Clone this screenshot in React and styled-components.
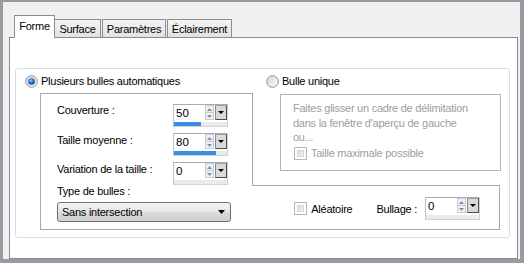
import React from "react";
import styled, { createGlobalStyle } from "styled-components";

const GlobalStyle = createGlobalStyle`
  * {
    box-sizing: border-box;
  }
  html,
  body {
    margin: 0;
    padding: 0;
    background: #979ca3;
  }
  body {
    font-family: "Liberation Sans", Arial, sans-serif;
    font-size: 11px;
    letter-spacing: -0.25px;
    color: #000;
  }
`;

const Window = styled.div`
  width: 524px;
  height: 263px;
  display: flex;
  flex-direction: column;
  background: #f0f0f0;
  border-style: solid;
  border-color: #979ca3;
  border-width: 2px 4px 4px 3px;
  padding: 13px 2px 0 6px;
`;

const TabStrip = styled.div`
  display: flex;
  align-items: flex-end;
  height: 23px;
  padding-left: 5px;
`;

const Tab = styled.div`
  width: ${p => p.$w}px;
  height: ${p => (p.$active ? 23 : 18)}px;
  margin-bottom: ${p => (p.$active ? 0 : 1)}px;
  margin-left: ${p => p.$ml || 0}px;
  padding-bottom: ${p => (p.$active ? 2 : 0)}px;
  display: flex;
  align-items: center;
  justify-content: center;
  border: 1px solid #898c95;
  border-bottom: none;
  background: ${p =>
    p.$active ? "#fff" : "linear-gradient(#f4f4f4, #e2e2e2)"};
  position: relative;
  z-index: ${p => (p.$active ? 1 : 0)};
`;

const Panel = styled.div`
  flex: 1;
  margin-top: -1px;
  display: flex;
  flex-direction: column;
  background: #fff;
  border: 1px solid #898c95;
  padding: 30px 7px 20px 5px;
`;

const Group = styled.div`
  flex: 1;
  display: flex;
  flex-direction: column;
  border: 1px solid #d5dfe5;
  border-radius: 3px;
  padding: 5px 8px 7px 9px;
`;

const RadioRow = styled.div`
  display: flex;
  height: 14px;
  align-items: center;
`;

const RadioCell = styled.label`
  display: flex;
  align-items: center;
  gap: 3px;
  width: ${p => (p.$w ? `${p.$w}px` : "auto")};
  padding-left: ${p => p.$pl || 0}px;
`;

const BodyRow = styled.div`
  flex: 1;
  display: flex;
  margin-top: 5px;
`;

const LeftBox = styled.div`
  width: 212px;
  margin-left: 15px;
  display: flex;
  flex-direction: column;
  border: 1px solid #a9a9a9;
  border-right: none;
  padding: 10px 0 0 16px;
`;

const FieldGrid = styled.div`
  display: grid;
  grid-template-columns: 116px 55px;
  row-gap: 6px;
  align-items: start;
`;

const FieldLabel = styled.div`
  line-height: 13px;
  padding-top: ${p => p.$pt || 0}px;
`;

const TypeLabel = styled.div`
  height: 13px;
  line-height: 13px;
`;

const Select = styled.div`
  width: 174px;
  height: 20px;
  margin-top: 4px;
  display: flex;
  align-items: center;
  justify-content: space-between;
  padding: 0 5px 0 4px;
  border: 1px solid #707070;
  border-radius: 3px;
  background: linear-gradient(#f3f3f3, #e6e6e6 50%, #dadada 51%, #d0d0d0);
`;

const SpinBox = styled.div`
  width: 55px;
  height: 23px;
  display: flex;
  flex-direction: column;
  background: #fff;
  border: 1px solid #d2d2d2;
  border-top-color: #ababab;
  border-left-color: #c2c2c2;
`;

const SpinTop = styled.div`
  display: flex;
  height: 17px;
`;

const SpinValue = styled.div`
  flex: 1;
  padding: 2px 0 0 2px;
  font-size: 11.5px;
  letter-spacing: 0;
  line-height: 13px;
`;

const SpinArrows = styled.div`
  width: 9px;
  display: flex;
  flex-direction: column;
  margin: 0 1px 2px 0;
`;

const SpinArrow = styled.div`
  flex: 1;
  display: flex;
  align-items: center;
  justify-content: center;
  border: 1px solid #c5ccd6;
  background: #eef1f5;
  & + & {
    border-top: none;
  }
`;

const DropBtn = styled.div`
  width: 12px;
  height: 15px;
  display: flex;
  align-items: center;
  justify-content: center;
  background: #d9d9d9;
  border: 1px solid #4e4e4e;
  border-top-color: #a3a3a3;
  border-left-color: #8a8a8a;
`;

const SpinTrack = styled.div`
  margin-top: auto;
  height: 4px;
  background: #ebebeb;
`;

const SpinFill = styled.div`
  height: 100%;
  background: #3a8de4;
`;

const RightCol = styled.div`
  flex: 1;
  display: flex;
  flex-direction: column;
`;

const TopPart = styled.div`
  flex: 1;
  border-left: 1px solid #a9a9a9;
  padding: 1px 0 0 27px;
`;

const DescBox = styled.div`
  height: 77px;
  border: 1px solid #b4b4b4;
  padding: 6px 0 0 12px;
  color: #9d9d9d;
`;

const DescText = styled.div`
  line-height: 14.5px;
`;

const CheckRow = styled.label`
  display: flex;
  align-items: center;
  gap: 4px;
  margin: ${p => p.$m || "0"};
  color: ${p => (p.$disabled ? "#9d9d9d" : "#000")};
`;

const CheckBox = styled.span`
  width: 13px;
  height: 13px;
  padding: 2px;
  display: inline-flex;
  border: 1px solid #b5b5b5;
  background: #fff;
`;

const CheckInner = styled.span`
  flex: 1;
  border: 1px solid #d6d6d6;
  background: linear-gradient(135deg, #d9d9d9, #f5f5f5);
`;

const BottomBox = styled.div`
  height: 45px;
  margin-right: 1px;
  display: flex;
  align-items: center;
  justify-content: flex-end;
  padding: 2px 19px 0 0;
  border: 1px solid #a9a9a9;
  border-left: none;
`;

const BullageLabel = styled.span`
  margin: 0 8px 0 24px;
`;

const Tri = ({ up, color = "#000", w = 7, h = 4 }) => (
  <svg width={w} height={h} viewBox={`0 0 ${w} ${h}`}>
    <polygon
      points={up ? `0,${h} ${w / 2},0 ${w},${h}` : `0,0 ${w},0 ${w / 2},${h}`}
      fill={color}
    />
  </svg>
);

const Radio = ({ id, checked }) => (
  <svg width="13" height="13" viewBox="0 0 13 13">
    <defs>
      <linearGradient id={`${id}-f`} x1="0" y1="0" x2="1" y2="1">
        <stop offset="0" stopColor="#d6d6d6" />
        <stop offset="1" stopColor="#fafafa" />
      </linearGradient>
      <radialGradient id={`${id}-d`} cx="0.4" cy="0.35" r="0.7">
        <stop offset="0" stopColor="#8fd0ff" />
        <stop offset="0.5" stopColor="#2a76c6" />
        <stop offset="1" stopColor="#173f73" />
      </radialGradient>
    </defs>
    <circle cx="6.5" cy="6.5" r="5.8" fill={`url(#${id}-f)`} stroke="#8d9199" />
    {checked && (
      <>
        <circle cx="6.5" cy="6.5" r="4.2" fill="#c7def2" />
        <circle cx="6.5" cy="6.5" r="3.3" fill={`url(#${id}-d)`} />
      </>
    )}
  </svg>
);

const Spinner = ({ value, fill }) => (
  <SpinBox>
    <SpinTop>
      <SpinValue>{value}</SpinValue>
      <SpinArrows>
        <SpinArrow>
          <Tri up color="#7d8fa8" w={5} h={3} />
        </SpinArrow>
        <SpinArrow>
          <Tri color="#7d8fa8" w={5} h={3} />
        </SpinArrow>
      </SpinArrows>
      <DropBtn>
        <Tri w={6} h={3} />
      </DropBtn>
    </SpinTop>
    <SpinTrack>
      <SpinFill style={{ width: `${fill}%` }} />
    </SpinTrack>
  </SpinBox>
);

const Check = () => (
  <CheckBox>
    <CheckInner />
  </CheckBox>
);

const tabs = [
  { name: "Forme", w: 41, active: true },
  { name: "Surface", w: 47, ml: -1 },
  { name: "Paramètres", w: 64, ml: 1 },
  { name: "Éclairement", w: 65, ml: 1 },
];

const fields = [
  { label: "Couverture :", value: "50", fill: 50 },
  { label: "Taille moyenne :", value: "80", fill: 80, pt: 1 },
  { label: "Variation de la taille :", value: "0", fill: 0, pt: 1 },
];

export default function App() {
  return (
    <>
      <GlobalStyle />
      <Window>
        <TabStrip>
          {tabs.map(t => (
            <Tab key={t.name} $w={t.w} $ml={t.ml} $active={t.active}>
              {t.name}
            </Tab>
          ))}
        </TabStrip>
        <Panel>
          <Group>
            <RadioRow>
              <RadioCell $w={228}>
                <Radio id="r1" checked />
                Plusieurs bulles automatiques
              </RadioCell>
              <RadioCell $pl={13}>
                <Radio id="r2" />
                Bulle unique
              </RadioCell>
            </RadioRow>
            <BodyRow>
              <LeftBox>
                <FieldGrid>
                  {fields.map(f => (
                    <React.Fragment key={f.label}>
                      <FieldLabel $pt={f.pt}>{f.label}</FieldLabel>
                      <Spinner value={f.value} fill={f.fill} />
                    </React.Fragment>
                  ))}
                </FieldGrid>
                <TypeLabel>Type de bulles :</TypeLabel>
                <Select>
                  <span>Sans intersection</span>
                  <Tri w={7} h={4} />
                </Select>
              </LeftBox>
              <RightCol>
                <TopPart>
                  <DescBox>
                    <DescText>
                      Faites glisser un cadre de délimitation
                      <br />
                      dans la fenêtre d'aperçu de gauche
                      <br />
                      ou...
                    </DescText>
                    <CheckRow $disabled $m="2px 0 0 1px">
                      <Check />
                      Taille maximale possible
                    </CheckRow>
                  </DescBox>
                </TopPart>
                <BottomBox>
                  <CheckRow>
                    <Check />
                    Aléatoire
                  </CheckRow>
                  <BullageLabel>Bullage :</BullageLabel>
                  <Spinner value="0" fill={0} />
                </BottomBox>
              </RightCol>
            </BodyRow>
          </Group>
        </Panel>
      </Window>
    </>
  );
}
